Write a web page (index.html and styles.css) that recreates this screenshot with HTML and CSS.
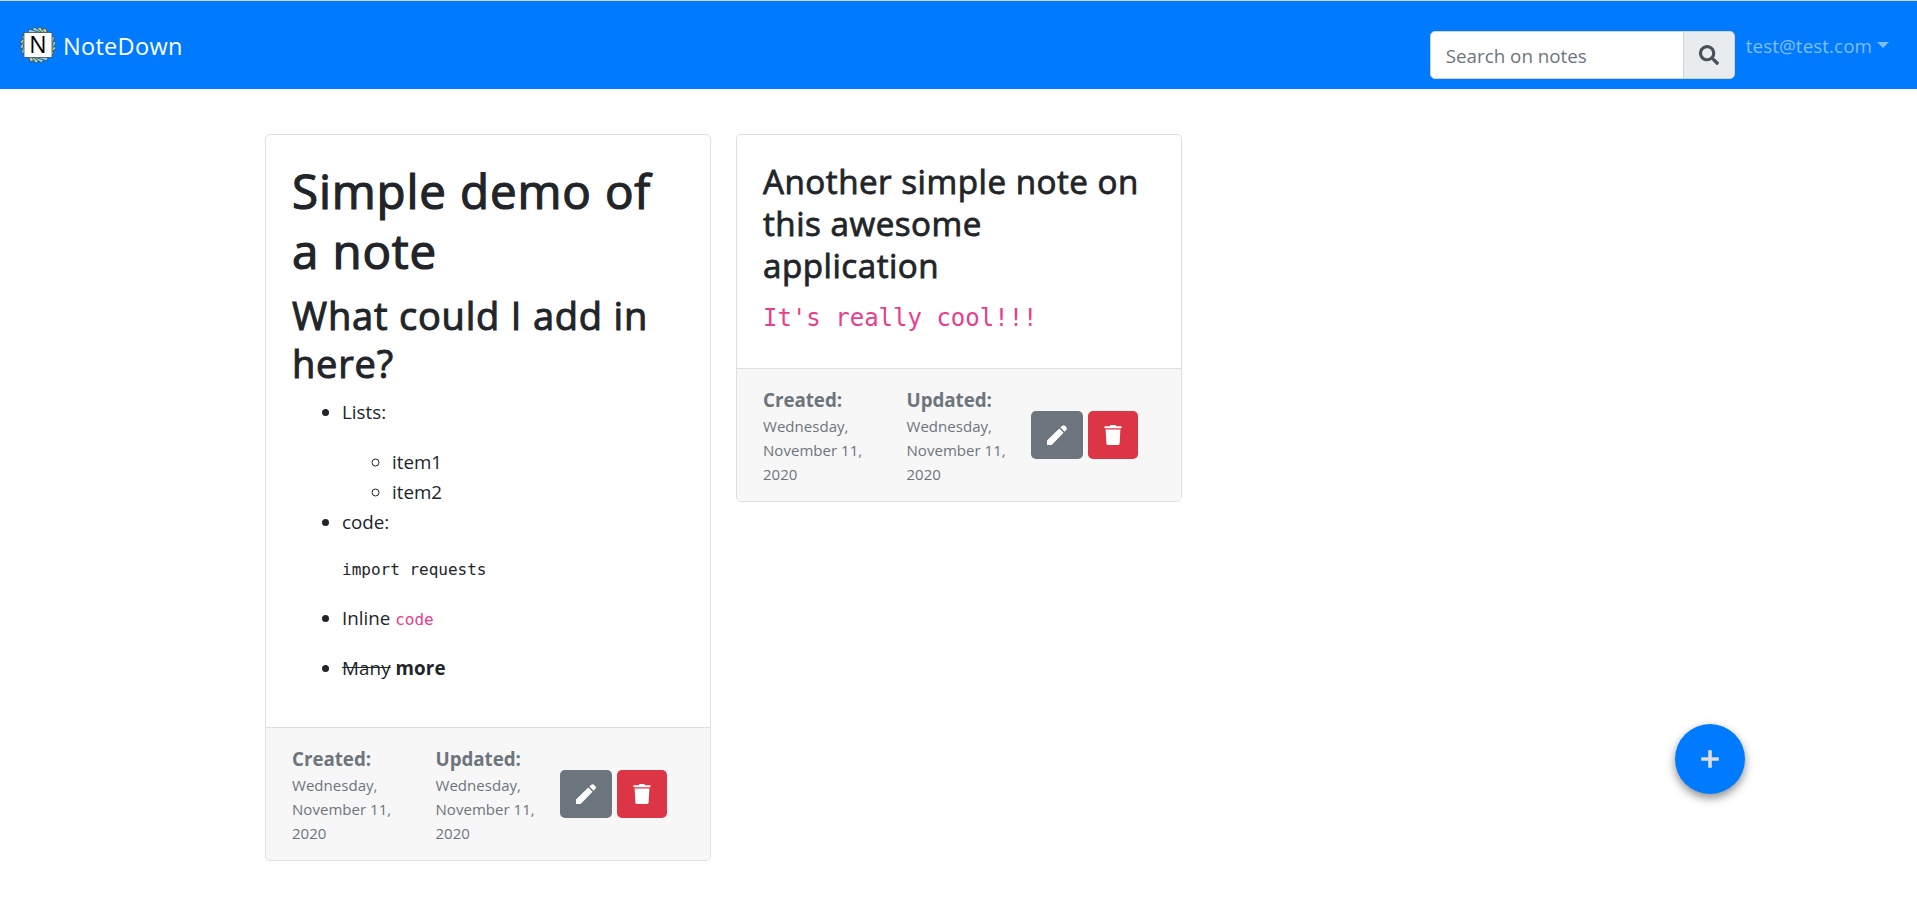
FILE: index.html
```
<!DOCTYPE html>
<html lang="en">
<head>
<meta charset="utf-8">
<title>NoteDown</title>
<link rel="stylesheet" href="styles.css">
</head>
<body>
<nav class="navbar">
  <a class="brand" href="#">
    <svg class="logo" viewBox="0 0 38 38" aria-hidden="true">
      <g stroke="#36505c" stroke-width=".8">
        <rect x="5.500" y="6.500" width="27" height="25" fill="#f5c893" transform="rotate(72 19 19)"/>
        <rect x="5.500" y="6.500" width="27" height="25" fill="#a5d6a0" transform="rotate(54 19 19)"/>
        <rect x="5.500" y="6.500" width="27" height="25" fill="#8fd0e8" transform="rotate(36 19 19)"/>
        <rect x="5.500" y="6.500" width="27" height="25" fill="#8fd0e8" transform="rotate(18 19 19)"/>
        <rect x="5" y="6.500" width="28" height="25" fill="#fff"/>
      </g>
      <text class="logo-letter" x="19" y="27" text-anchor="middle">N</text>
    </svg>
    <span class="brand-name">NoteDown</span>
  </a>
  <div class="nav-right">
    <form class="search">
      <input class="search-input" type="text" placeholder="Search on notes">
      <button class="search-button" type="button" aria-label="Search">
        <svg class="search-icon" viewBox="0 0 512 512"><path fill="currentColor" d="M505 442.700L405.300 343c-4.500-4.500-10.600-7-17-7H372c27.600-35.300 44-79.700 44-128C416 93.100 322.900 0 208 0S0 93.100 0 208s93.100 208 208 208c48.300 0 92.700-16.400 128-44v16.300c0 6.400 2.500 12.500 7 17l99.700 99.700c9.400 9.400 24.600 9.400 33.900 0l28.300-28.300c9.400-9.400 9.400-24.600.1-34zM208 336c-70.700 0-128-57.200-128-128 0-70.700 57.200-128 128-128 70.700 0 128 57.200 128 128 0 70.700-57.200 128-128 128z"/></svg>
      </button>
    </form>
    <a class="user" href="#"><span class="user-name">test@test.com</span><span class="caret"></span></a>
  </div>
</nav>
<main class="notes">
  <article class="card">
    <div class="card-body">
      <h1>Simple demo of a&nbsp;note</h1>
      <h2>What could I add in here?</h2>
      <ul>
        <li><p>Lists:</p>
          <ul><li>item1</li><li>item2</li></ul>
        </li>
        <li><p>code:</p><pre>import requests</pre></li>
        <li><p>Inline <code>code</code></p></li>
        <li><p><del>Many</del> <strong>more</strong></p></li>
      </ul>
    </div>
    <footer class="card-footer">
      <div class="stamp"><strong>Created:</strong><small>Wednesday, November 11, 2020</small></div>
      <div class="stamp"><strong>Updated:</strong><small>Wednesday, November 11, 2020</small></div>
      <div class="actions">
        <button class="btn edit" aria-label="Edit"><svg viewBox="0 0 20 20"><path fill="#fff" d="M12.300 3.600 0 15.400V20h4.700L16.500 7.800zM13.400 2.500 15 .9c1-1 2.200-1 3.100 0l1.100 1.100c1 1 1 2.100 0 3.100l-1.600 1.600z"/></svg></button>
        <button class="btn delete" aria-label="Delete"><svg viewBox="0 0 18 20"><path fill="#fff" d="M.5 1.200h5.300L6.500 0h5l.7 1.200h5.300v2H.5zM1.600 4.500h14.800l-.8 14q-.1 1.500-1.600 1.500H4q-1.500 0-1.600-1.500z"/></svg></button>
      </div>
    </footer>
  </article>
  <article class="card">
    <div class="card-body">
      <h3>Another simple note on this awesome application</h3>
      <h4><code>It's really cool!!!</code></h4>
    </div>
    <footer class="card-footer">
      <div class="stamp"><strong>Created:</strong><small>Wednesday, November 11, 2020</small></div>
      <div class="stamp"><strong>Updated:</strong><small>Wednesday, November 11, 2020</small></div>
      <div class="actions">
        <button class="btn edit" aria-label="Edit"><svg viewBox="0 0 20 20"><path fill="#fff" d="M12.300 3.600 0 15.400V20h4.700L16.500 7.800zM13.400 2.500 15 .9c1-1 2.200-1 3.100 0l1.100 1.100c1 1 1 2.100 0 3.100l-1.600 1.600z"/></svg></button>
        <button class="btn delete" aria-label="Delete"><svg viewBox="0 0 18 20"><path fill="#fff" d="M.5 1.200h5.300L6.500 0h5l.7 1.200h5.300v2H.5zM1.600 4.500h14.800l-.8 14q-.1 1.500-1.600 1.500H4q-1.500 0-1.600-1.500z"/></svg></button>
      </div>
    </footer>
  </article>
</main>
<button class="fab" aria-label="Add note"><svg viewBox="0 0 18 18"><path fill="none" stroke="#dcdcdc" stroke-width="3.600" stroke-linecap="square" d="M9 2v14M2 9h14"/></svg></button>
</body>
</html>
```
FILE: styles.css
```
* { box-sizing: border-box; }
body {
  margin: 0;
  min-height: 900px;
  background: #fff;
  color: #212529;
  font: 400 18.800px/30px "Open Sans", "Noto Sans", sans-serif;
}
.navbar {
  display: flex;
  justify-content: space-between;
  height: 89px;
  padding: 0 28px 0 19px;
  background: #007bff;
  border-top: 1px solid #d3d8dc;
}
.brand { display: flex; align-items: center; gap: 6px; height: 88px; color: #fff; text-decoration: none; }
.logo { width: 38px; height: 38px; }
.logo-letter { font: 23px "Open Sans", sans-serif; fill: #000; }
.brand-name { padding-top: 2px; font-size: 23.500px; letter-spacing: .3px; }
.nav-right { display: flex; gap: 11px; }
.search { display: flex; width: 305px; height: 48px; margin-top: 30px; }
.search-input {
  width: 254px;
  padding: 2px 15px 0;
  border: 1px solid #ced4da;
  border-radius: 5px 0 0 5px;
  background: #fff;
  font: inherit;
}
.search-input::placeholder { color: #6c757d; opacity: 1; }
.search-button {
  display: flex;
  align-items: center;
  justify-content: center;
  width: 52px;
  margin-left: -1px;
  padding: 0;
  border: 1px solid #ced4da;
  border-radius: 0 5px 5px 0;
  background: #e9ecef;
  color: #495057;
}
.search-icon { width: 20px; height: 20px; }
.user { display: flex; gap: 5px; height: 88px; padding-top: 30px; color: #80bdff; text-decoration: none; }
.user-name { letter-spacing: .08px; }
.caret { margin-top: 11px; height: 0; border: 6px solid transparent; border-top-color: currentColor; border-bottom: 0; }
.notes { display: flex; align-items: flex-start; gap: 25px; margin: 45px 0 0 265px; }
.card { width: 446px; border: 1px solid #dfdfdf; border-radius: 5px; overflow: hidden; }
.card-body { padding: 26px 24px 24px 26px; }
h1, h2, h3, h4 { margin: 0 0 10px; font-weight: 400; }
h1 { font-size: 47.500px; line-height: 60px; letter-spacing: .85px; -webkit-text-stroke: 1.200px; }
h2 { font-size: 38px; line-height: 48px; letter-spacing: .8px; -webkit-text-stroke: 1px; }
h3 { font-size: 33.200px; line-height: 42px; letter-spacing: .5px; -webkit-text-stroke: .8px; }
h4 { margin-bottom: 11px; font-size: 28px; line-height: 36px; }
p { margin: 0 0 20px; }
ul { margin: 0; padding-left: 50px; }
pre { margin: 0 0 20px; line-height: 26px; }
pre, code { font-family: "DejaVu Sans Mono", monospace; font-size: 16px; }
code { color: #e83e8c; line-height: 1; }
del, p strong { letter-spacing: .1px; }
h4 code { font-size: 24px; }
.card-footer {
  display: flex;
  height: 133px;
  padding: 16px 25px 14px 26px;
  border-top: 1px solid #dfdfdf;
  background: #f7f7f7;
  color: #6c757d;
}
.stamp { width: 143.500px; padding-right: 25px; }
.stamp strong, .stamp small { display: block; }
.stamp strong { height: 29px; letter-spacing: -.05px; }
.stamp small { font-size: 15px; line-height: 24px; letter-spacing: .04px; }
.actions { display: flex; gap: 5px; margin: 26px 0 0 -19px; }
.btn { display: flex; align-items: center; justify-content: center; height: 48px; padding: 0; border: 0; border-radius: 5px; }
.btn svg { height: 20px; }
.edit { width: 52px; background: #6c757d; }
.delete { width: 50px; background: #dc3545; }
.fab {
  position: fixed;
  right: 172px;
  bottom: 106px;
  display: flex;
  align-items: center;
  justify-content: center;
  width: 70px;
  height: 70px;
  padding: 0;
  border: 0;
  border-radius: 50%;
  background: #007bff;
  box-shadow: 0 4px 10px rgba(0, 0, 0, .45);
}
.fab svg { width: 18px; height: 18px; }
```
